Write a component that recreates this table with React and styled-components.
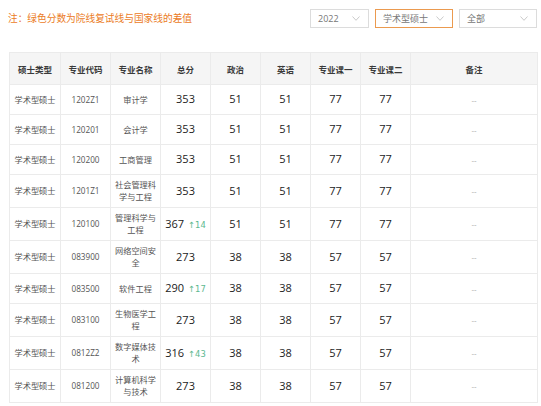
import React from "react";
import styled, { createGlobalStyle } from "styled-components";

const GlobalStyle = createGlobalStyle`
  html, body { margin: 0; padding: 0; background: #fff; }
  body { font-family: "Open Sans", "Noto Sans CJK SC", sans-serif; }
`;

const Page = styled.div`
  width: 541px;
  box-sizing: border-box;
  padding: 9px 4px 0 8px;
`;

const TopBar = styled.div`
  display: flex;
  align-items: center;
  justify-content: space-between;
  height: 19px;
`;

const Note = styled.div`
  color: #eb7b1e;
  font-size: 9.7px;
  line-height: 19px;
  font-family: "Noto Sans CJK SC", sans-serif;
`;

const Filters = styled.div`
  display: flex;
  gap: 6px;
`;

const Select = styled.div`
  box-sizing: border-box;
  width: ${(p) => p.$w}px;
  height: 19px;
  border: 1px solid ${(p) => (p.$active ? "#eb9a4f" : "#dcdcdc")};
  background: #fff;
  display: flex;
  align-items: center;
  justify-content: space-between;
  padding: 0 8px 0 7px;
  color: #777;
  font-size: 9px;
  font-family: "Open Sans", "Noto Sans CJK SC", sans-serif;
`;

const Chevron = () => (
  <svg width="8" height="5" viewBox="0 0 8 5">
    <path d="M0.5 0.5 L4 4.3 L7.5 0.5" fill="none" stroke="#c4c4c4" strokeWidth="0.9" />
  </svg>
);

const Table = styled.table`
  margin-top: 24px;
  margin-left: 1px;
  width: 528px;
  table-layout: fixed;
  border-collapse: collapse;
`;

const HeadCell = styled.th`
  background: #f5f5f5;
  border: 1px solid #ebebeb;
  height: 31px;
  padding: 0;
  font-size: 8.5px;
  font-weight: 700;
  color: #3a3a3a;
  font-family: "Noto Sans CJK SC", sans-serif;
  text-align: center;
  vertical-align: middle;
`;

const Row = styled.tr`
  height: ${(p) => (p.$tall ? 33 : 30)}px;
`;

const Cell = styled.td`
  border: 1px solid #ebebeb;
  padding: 4px 3px;
  text-align: center;
  vertical-align: middle;
  color: #555;
  font-size: 8.2px;
  line-height: 12px;
  font-family: "Open Sans", "Noto Sans CJK SC", sans-serif;
  word-break: break-all;
`;

const Num = styled.span`
  font-size: 11px;
  color: #222;
  font-family: "Open Sans", sans-serif;
`;

const Diff = styled.span`
  margin-left: 4px;
  font-size: 8.4px;
  color: #5db890;
  font-family: "DejaVu Sans", "Open Sans", sans-serif;
`;

const Dash = styled.span`
  color: #a8a8a8;
  font-size: 8px;
`;

const headers = ["硕士类型", "专业代码", "专业名称", "总分", "政治", "英语", "专业课一", "专业课二", "备注"];
const widths = [51, 50, 50, 50, 50, 50, 50, 50, 127];

const rows = [
  ["1202Z1", "审计学", 353, null, 51, 51, 77, 77],
  ["120201", "会计学", 353, null, 51, 51, 77, 77],
  ["120200", "工商管理", 353, null, 51, 51, 77, 77],
  ["1201Z1", "社会管理科学与工程", 353, null, 51, 51, 77, 77],
  ["120100", "管理科学与工程", 367, 14, 51, 51, 77, 77],
  ["083900", "网络空间安全", 273, null, 38, 38, 57, 57],
  ["083500", "软件工程", 290, 17, 38, 38, 57, 57],
  ["083100", "生物医学工程", 273, null, 38, 38, 57, 57],
  ["0812Z2", "数字媒体技术", 316, 43, 38, 38, 57, 57],
  ["081200", "计算机科学与技术", 273, null, 38, 38, 57, 57],
];

export default function App() {
  return (
    <>
      <GlobalStyle />
      <Page>
        <TopBar>
          <Note>注：绿色分数为院线复试线与国家线的差值</Note>
          <Filters>
            <Select $w={59}>
              <span>2022</span>
              <Chevron />
            </Select>
            <Select $w={78} $active>
              <span>学术型硕士</span>
              <Chevron />
            </Select>
            <Select $w={78}>
              <span>全部</span>
              <Chevron />
            </Select>
          </Filters>
        </TopBar>
        <Table>
          <colgroup>
            {widths.map((w, i) => (
              <col key={i} style={{ width: w }} />
            ))}
          </colgroup>
          <thead>
            <tr>
              {headers.map((h) => (
                <HeadCell key={h}>{h}</HeadCell>
              ))}
            </tr>
          </thead>
          <tbody>
            {rows.map((r) => (
              <Row key={r[0]} $tall={r[1].length > 5}>
                <Cell>学术型硕士</Cell>
                <Cell>{r[0]}</Cell>
                <Cell>{r[1]}</Cell>
                <Cell>
                  <Num>{r[2]}</Num>
                  {r[3] != null && <Diff>↑{r[3]}</Diff>}
                </Cell>
                <Cell><Num>{r[4]}</Num></Cell>
                <Cell><Num>{r[5]}</Num></Cell>
                <Cell><Num>{r[6]}</Num></Cell>
                <Cell><Num>{r[7]}</Num></Cell>
                <Cell><Dash>--</Dash></Cell>
              </Row>
            ))}
          </tbody>
        </Table>
      </Page>
    </>
  );
}
